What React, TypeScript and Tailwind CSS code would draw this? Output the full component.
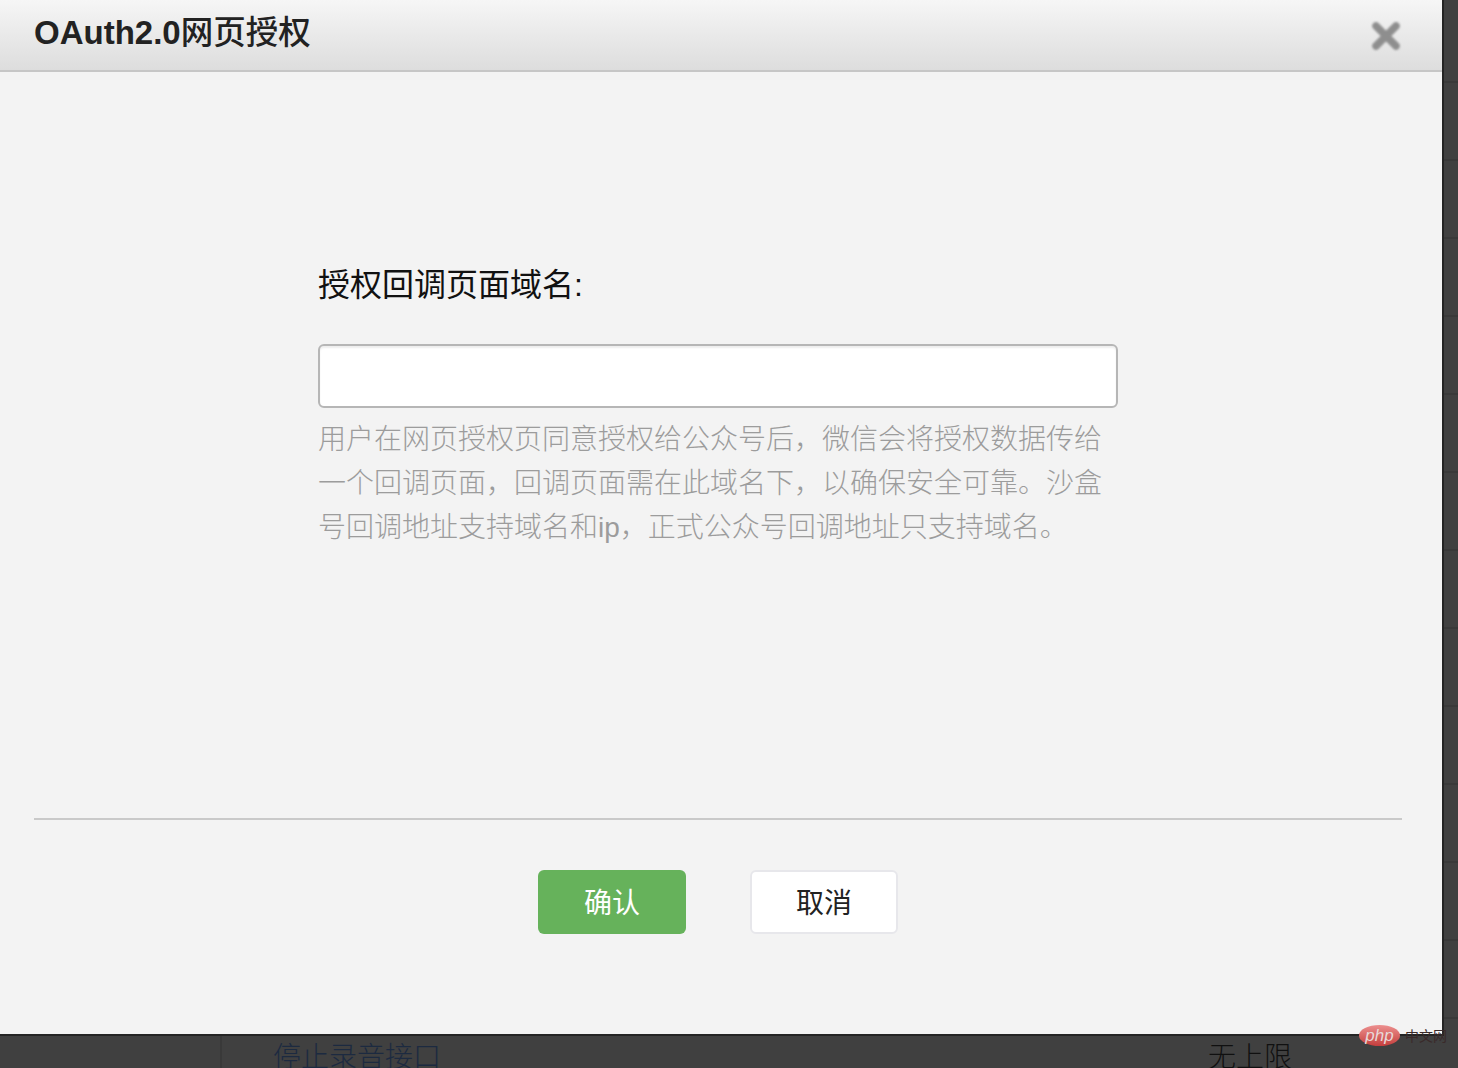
const font = { fontFamily: '"Liberation Sans", "Noto Sans CJK SC", sans-serif' };

export default function App() {
  const rows = Array.from({ length: 13 });
  return (
    <div className="relative h-[1068px] w-[1458px] overflow-hidden bg-[#404040]" style={font}>
      {/* page behind the overlay */}
      <div className="flex flex-col pt-[5px]">
        {rows.map((_, i) => (
          <div key={i} className="h-[78px] border-b-2 border-[#393939]" />
        ))}
        <div className="flex h-[78px]">
          <div className="h-full w-[222px] border-r-2 border-[#393939]" />
          <div className="w-[986px] pl-[51px] pt-[21px] text-[28px] leading-[36px] font-light text-[#1c2a40]">停止录音接口</div>
          <div className="pt-[21px] text-[28px] leading-[36px] font-light text-[#101010]">无上限</div>
        </div>
      </div>

      {/* dialog */}
      <div className="absolute left-0 top-0 flex h-[1036px] w-[1444px] flex-col border-r-2 border-b-2 border-[#242424] bg-[#f3f3f3]">
        <div className="flex h-[72px] shrink-0 items-start justify-between border-b-2 border-[#c6c6c6] bg-gradient-to-b from-[#f6f6f6] to-[#dddddd] pl-[34px] pr-[40px]">
          <h1 className="pt-[13px] text-[33px] leading-[40px] font-bold text-[#222222]">OAuth2.0<span className="text-[32.5px] font-medium">网页授权</span></h1>
          <svg width="32" height="32" viewBox="0 0 32 32" className="mt-[20px] blur-[0.8px]">
            <path d="M6 6 L26 26 M26 6 L6 26" stroke="#8e8e8e" strokeWidth="7.5" strokeLinecap="round" />
          </svg>
        </div>

        <div className="flex h-[746px] shrink-0 flex-col pl-[318px] pt-[193px]">
          <label className="text-[32px] leading-[40px] font-normal text-[#111111]">授权回调页面域名:</label>
          <div className="mt-[39px] h-[64px] w-[800px] rounded-[6px] border-2 border-[#b6b6b6] bg-white shadow-[inset_0_2px_2px_rgba(0,0,0,0.07)]" />
          <p className="mt-[10px] w-[800px] text-[28px] leading-[44px] font-light text-[#9c9c9c]">
            用户在网页授权页同意授权给公众号后，微信会将授权数据传给
            <br />
            一个回调页面，回调页面需在此域名下，以确保安全可靠。沙盒
            <br />
            号回调地址支持域名和ip，正式公众号回调地址只支持域名。
          </p>
        </div>

        <div className="mx-[34px] h-[2px] w-[1368px] shrink-0 bg-[#c9c9c9]" />

        <div className="flex gap-[64px] pl-[538px] pt-[50px]">
          <button className="h-[64px] w-[148px] rounded-[6px] bg-[#66b25b] pt-[4px] text-[28px] font-normal text-white">确认</button>
          <button className="h-[64px] w-[148px] rounded-[6px] border-2 border-[#e7e7eb] bg-white pt-[4px] text-[28px] font-normal text-[#222222]">取消</button>
        </div>
      </div>

      {/* watermark */}
      <div className="absolute left-[1359px] top-[1025px] flex items-center gap-[5px]">
        <div className="flex h-[21px] w-[41px] items-center justify-center rounded-[50%] bg-gradient-to-b from-[#ec8f8f] to-[#c43d3d] text-[17px] leading-none italic text-[#e8d8d8]">php</div>
        <span className="text-[14px] leading-none font-normal text-[#3a2a2a]">中文网</span>
      </div>
    </div>
  );
}
